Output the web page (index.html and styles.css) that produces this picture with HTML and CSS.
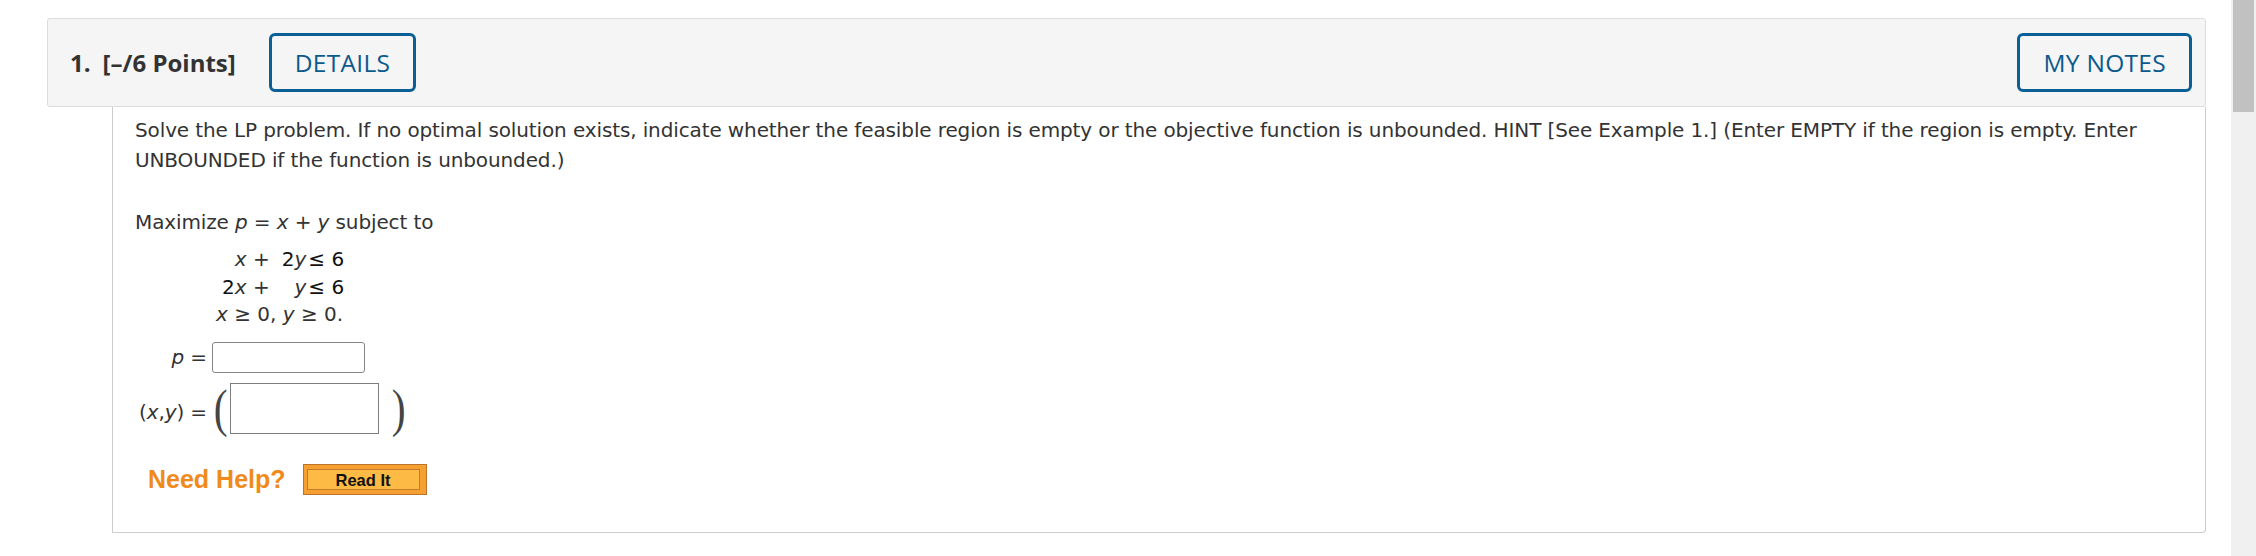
FILE: index.html
```html
<!DOCTYPE html>
<html lang="en">
<head>
<meta charset="utf-8">
<title>Question 1</title>
<link rel="stylesheet" href="styles.css">
</head>
<body>
<div class="page">
  <main class="main">
    <div class="q-header">
      <div class="q-title"><span class="q-num">1.</span><span class="q-points">[–/6 Points]</span></div>
      <button class="q-btn details">DETAILS</button>
      <div class="spacer"></div>
      <button class="q-btn notes">MY NOTES</button>
    </div>
    <div class="q-body">
      <p class="intro">Solve the LP problem. If no optimal solution exists, indicate whether the feasible region is empty or the objective function is unbounded. HINT [See Example 1.] (Enter EMPTY if the region is empty. Enter UNBOUNDED if the function is unbounded.)</p>
      <p class="objective">Maximize <i>p</i> = <i>x</i> + <i>y</i> subject to</p>
      <div class="system">
        <div class="ineqs">
          <span class="ca"><i>x</i> +</span><span class="cb"><span class="n">2</span><i>y</i></span><span class="cc n">≤ 6</span>
          <span class="ca"><span class="n">2</span><i>x</i> +</span><span class="cb"><i>y</i></span><span class="cc n">≤ 6</span>
        </div>
        <div class="nonneg"><i>x</i> ≥ 0, <i>y</i> ≥ 0.</div>
      </div>
      <div class="answers">
        <span class="lbl"><i>p</i> =</span>
        <div class="cell"><input class="inp-p" type="text"></div>
        <span class="lbl lbl-xy">(<i>x</i>,<i>y</i>) =</span>
        <div class="cell pair"><span class="paren">(</span><input class="inp-xy" type="text"><span class="paren right">)</span></div>
      </div>
      <div class="help">
        <span class="need">Need Help?</span>
        <span class="readit"><span class="readit-inner">Read It</span></span>
      </div>
    </div>
  </main>
  <div class="scrollbar"><div class="thumb"></div></div>
</div>
</body>
</html>
```
FILE: styles.css
```css
html, body {
  margin: 0;
  padding: 0;
  background: #ffffff;
  height: 556px;
  overflow: hidden;
}
body {
  font-family: "DejaVu Sans", Verdana, sans-serif;
  color: #333333;
}
.page {
  display: flex;
  height: 556px;
}
.main {
  flex: 1;
  padding: 18px 25px 0 47px;
}
.scrollbar {
  width: 25px;
  background: #f0f0f0;
  padding: 0 2px;
  box-sizing: border-box;
}
.thumb {
  height: 112px;
  background: #c1c1c1;
}

/* header */
.q-header {
  display: flex;
  align-items: center;
  background: #f5f5f5;
  border: 1px solid #dddddd;
  border-radius: 3px;
  padding: 14px 13px 14px 22px;
  font-family: "Open Sans", sans-serif;
}
.q-title {
  font-weight: 700;
  font-size: 24px;
  color: #333333;
  display: flex;
  gap: 12px;
  margin-right: 33px;
}
.spacer { flex: 1; }
.q-btn {
  height: 59px;
  box-sizing: border-box;
  border: 3px solid #0b5f97;
  border-radius: 6px;
  background: transparent;
  color: #0b5a8e;
  font-family: "Open Sans", sans-serif;
  font-size: 24.5px;
  letter-spacing: 0.3px;
  padding: 0 23px;
}

/* body */
.q-body {
  margin-left: 65px;
  border: 1px solid #cccccc;
  border-top: none;
  border-bottom-right-radius: 4px;
  padding: 8px 22px 37px 22px;
  font-size: 20px;
  line-height: 30px;
  letter-spacing: -0.12px;
}
.q-body p { margin: 0; }
.intro { margin-bottom: 32px !important; }
.system {
  margin: 9px 0 0 81px;
  line-height: 27.5px;
  display: flex;
  flex-direction: column;
  align-items: flex-start;
  letter-spacing: 0;
}
.ineqs {
  display: grid;
  grid-template-columns: auto auto auto;
  margin-left: 6px;
}
.ca { text-align: right; padding-right: 12px; }
.cb { text-align: right; padding-right: 2px; }
.n { color: #111111; }
.answers {
  display: grid;
  grid-template-columns: 72px auto;
  column-gap: 5px;
  row-gap: 10px;
  align-items: center;
  margin-top: 13px;
}
.lbl { text-align: right; }
.lbl-xy { padding-top: 8px; }
.cell { display: flex; align-items: center; }
.inp-p {
  width: 153px;
  height: 31px;
  box-sizing: border-box;
  border: 1px solid #858585;
  border-radius: 3px;
  margin: 0;
}
.inp-xy {
  width: 149px;
  height: 51px;
  box-sizing: border-box;
  border: 1px solid #7d7d7d;
  border-radius: 0;
  margin: 0 11px 0 1px;
}
.paren {
  font-family: "Liberation Serif", serif;
  font-size: 52px;
  line-height: 51px;
  color: #444444;
  display: inline-block;
  transform: scaleX(0.8);
}
.help {
  display: flex;
  align-items: center;
  margin-top: 30px;
  padding-left: 13px;
}
.need {
  font-family: "Liberation Sans", Arial, sans-serif;
  font-weight: 700;
  font-size: 25px;
  line-height: 31px;
  color: #f08a1a;
  margin-right: 17px;
  letter-spacing: 0;
}
.readit {
  display: inline-flex;
  width: 124px;
  height: 31px;
  box-sizing: border-box;
  background: #f6a032;
  border: 1px solid #b9732a;
  padding: 4px 6px 4px 3px;
}
.readit-inner {
  flex: 1;
  background: #fdba45;
  border: 1px solid #c47c2c;
  font-family: "Liberation Sans", Arial, sans-serif;
  font-weight: 700;
  font-size: 16.5px;
  line-height: 20px;
  letter-spacing: 0;
  text-align: center;
  color: #111111;
}
```
